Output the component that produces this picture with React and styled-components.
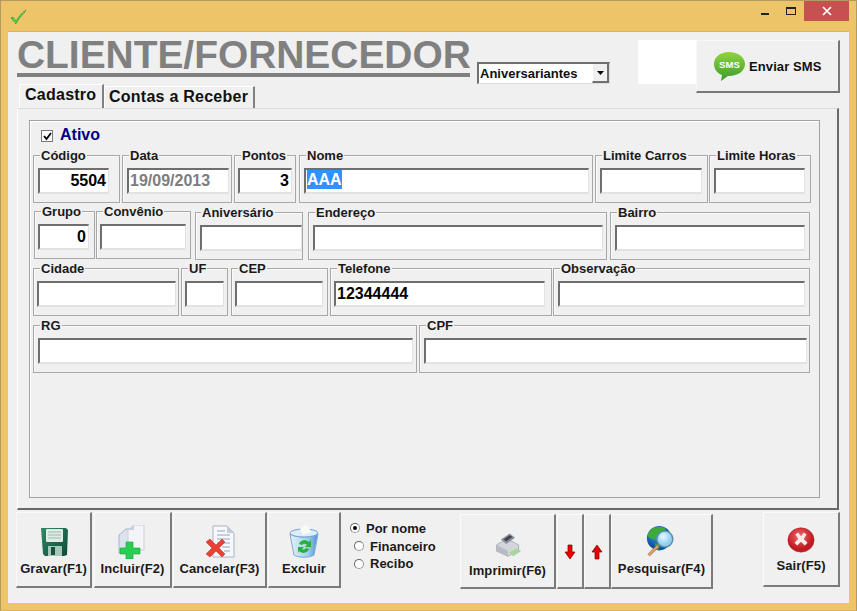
import React from 'react';
import styled, { createGlobalStyle } from 'styled-components';

const Global = createGlobalStyle`
  html, body { margin: 0; padding: 0; background: #edc467; }
  * { box-sizing: border-box; }
`;
const Win = styled.div`
  width: 857px; height: 611px; background: #edc467; display: flex; flex-direction: column;
  border: 1px solid #b39a5e; border-bottom-color: #d9b25c; padding: 0 7px 7px;
  font-family: "Liberation Sans", Arial, sans-serif; color: #111; overflow: hidden;
`;
const TitleBar = styled.div`
  height: 30px; flex: none; display: flex; align-items: flex-start; justify-content: space-between;
`;
const AppIcon = styled.svg`width: 17px; height: 17px; margin: 7px 0 0 2px;`;
const Controls = styled.div`display: flex; align-items: flex-start;`;
const Ctl = styled.div`
  width: ${p => p.$w}px; height: 20px; display: flex; align-items: center; justify-content: center;
  background: ${p => p.$bg || 'transparent'};
`;
const Client = styled.div`
  flex: 1; background: #f0f0f0; display: flex; flex-direction: column; padding: 0 10px 0 8px;
  border: 1px solid #d8b45f; border-width: 1px 0 0 0;
`;
const Top = styled.div`height: 76px; flex: none; display: flex; justify-content: space-between;`;
const TopLeft = styled.div`display: flex; flex-direction: column; justify-content: space-between;`;
const TitleRow = styled.div`display: flex; align-items: flex-start; padding: 4px 0 0 1px;`;
const Title = styled.h1`
  margin: 0; height: 41px; border-bottom: 4px solid #808080; color: #808080;
  font: bold 38.9px/37px "Liberation Sans", Arial, sans-serif; white-space: nowrap; width: 453px;
`;
const Select = styled.div`
  width: 133px; height: 22px; margin: 26px 0 0 7px; background: #fff; display: flex;
  border-top: 2px solid #707070; border-left: 2px solid #707070;
  border-right: 1px solid #ddd; border-bottom: 1px solid #ddd;
  font: bold 13px/19px "Liberation Sans", Arial, sans-serif; padding-left: 1px;
  justify-content: space-between;
`;
const SelectBtn = styled.div`
  width: 17px; background: #f0f0f0; display: flex; align-items: center; justify-content: center;
  border-right: 2px solid #707070; border-bottom: 2px solid #707070; border-left: 1px solid #fff;
`;
const Tabs = styled.div`display: flex; align-items: flex-end; padding-left: 3px;`;
const Tab = styled.div`
  height: ${p => p.$h}px; padding: 0 ${p => p.$px}px; width: ${p => p.$w}px;
  border-right: 2px solid #808080; border-left: 1px solid #fff; border-top: 1px solid #fff;
  font: bold 16px/${p => p.$lh}px "Liberation Sans", Arial, sans-serif; white-space: nowrap; letter-spacing: .25px;
`;
const TopRight = styled.div`display: flex; align-items: flex-start; padding: 8px 0 0;`;
const WhiteBox = styled.div`width: 58px; height: 44px; background: #fff;`;
const SmsBtn = styled.div`
  width: 144px; height: 53px; display: flex; align-items: center; gap: 3px; padding: 0 0 0 16px;
  border-top: 1px solid #f8f8f8; border-left: 1px solid #f8f8f8;
  border-right: 2px solid #777; border-bottom: 2px solid #777;
  font: bold 13px "Liberation Sans", Arial, sans-serif; letter-spacing: .1px; margin-right: -1px;
`;
const Panel = styled.div`
  width: 822px; height: 402px; flex: none; padding: 11px 17px 10px 11px; margin-left: 1px;
  border-top: 1px solid #dcdcdc; border-left: 1px solid #fff;
  border-right: 2px solid #696969; border-bottom: 2px solid #696969;
  display: flex;
`;
const Inner = styled.div`
  flex: 1; border: 1px solid #a2a2a2; padding: 0 0 0 3px;
  box-shadow: inset 1px 1px 0 #fff; display: flex; flex-direction: column;
`;
const CheckRow = styled.div`
  height: 34px; flex: none; display: flex; align-items: flex-start; padding: 6px 0 0 8px; gap: 7px;
  color: #000080; font: bold 16px/16px "Liberation Sans", Arial, sans-serif;
`;
const CheckBox = styled.div`
  width: 12px; height: 12px; margin-top: 3px; background: #fff; display: flex;
  border: 1px solid #7a7a7a; align-items: center; justify-content: center;
`;
const Row = styled.div`display: flex; flex: none; margin-top: ${p => p.$mt || 0}px; height: ${p => p.$h || 48}px;`;
const Group = styled.div`
  width: ${p => p.$w}px; height: 48px; margin-left: ${p => p.$ml || 0}px;
  margin-top: ${p => p.$top || 0}px;
  border: 1px solid #a8a8a8; box-shadow: inset 1px 1px 0 #fafafa; flex: none; position: relative;
  padding: 12px 0 0 ${p => p.$ix}px;
`;
const Legend = styled.span`
  position: absolute; left: ${p => p.$x}px; top: -8px; background: #f0f0f0; padding: 0 1px;
  font: bold 13px/15px "Liberation Sans", Arial, sans-serif; white-space: nowrap; color: #1a1a1a;
`;
const Input = styled.div`
  width: ${p => p.$w}px; height: 26px; background: #fff; overflow: hidden;
  border-top: 2px solid #6e6e6e; border-left: 2px solid #6e6e6e;
  border-right: 1px solid #e2e2e2; border-bottom: 2px solid #e2e2e2;
  font: bold 16px/21px "Liberation Sans", Arial, sans-serif; padding: 0 2px 0 1px;
  text-align: ${p => p.$right ? 'right' : 'left'}; color: ${p => p.$muted ? '#7d7d7d' : '#000'};
`;
const Sel = styled.span`background: #3390ff; color: #fff; display: inline-block; height: 19px; line-height: 20px; vertical-align: top;`;
const Footer = styled.div`display: flex; align-items: flex-start; padding-top: 2px; width: 840px;`;
const Btn = styled.div`
  width: ${p => p.$w}px; height: ${p => p.$h || 76}px; margin-left: ${p => p.$ml || 0}px; margin-top: ${p => p.$mt || 0}px;
  flex: none; display: flex; flex-direction: column; align-items: center; padding-top: ${p => p.$pt || 12}px;
  border-top: 1px solid #fafafa; border-left: 1px solid #fafafa;
  border-right: 2px solid #7b7b7b; border-bottom: 2px solid #7b7b7b;
  font: bold 13px/15px "Liberation Sans", Arial, sans-serif; letter-spacing: .1px; white-space: nowrap; color: #1a1a1a;
`;
const BtnIcon = styled.svg`width: ${p => p.$s || 34}px; height: ${p => p.$s || 34}px; flex: none; margin-bottom: ${p => p.$mb ?? 2}px;`;
const Radios = styled.div`
  width: 110px; margin-left: 9px; padding-top: 7px; flex: none; display: flex; flex-direction: column;
  font: bold 13px/17px "Liberation Sans", Arial, sans-serif; color: #1a1a1a;
`;
const RadioRow = styled.div`display: flex; align-items: center; gap: 6px; padding-left: ${p => p.$pl}px; height: ${p => p.$h}px;`;
const Radio = styled.div`
  width: 10px; height: 10px; border-radius: 50%; background: #fff; border: 1px solid #9a9a9a;
  border-top-color: #666; border-left-color: #666; display: flex; align-items: center; justify-content: center;
`;
const Dot = styled.div`width: 4px; height: 4px; border-radius: 50%; background: #000;`;

const rows = [
  { mt: 0, groups: [
    { l: 'Código', ml: 0, w: 87, lx: 6, ix: 4, iw: 71, v: '5504', r: 1 },
    { l: 'Data', ml: 2, w: 110, lx: 6, ix: 4, iw: 102, v: '19/09/2013', m: 1 },
    { l: 'Pontos', ml: 2, w: 62, lx: 6, ix: 3, iw: 54, v: '3', r: 1 },
    { l: 'Nome', ml: 3, w: 294, lx: 6, ix: 4, iw: 285, sel: 'AAA' },
    { l: 'Limite Carros', ml: 2, w: 113, lx: 6, ix: 4, iw: 102 },
    { l: 'Limite Horas', ml: 1, w: 102, lx: 6, ix: 4, iw: 91 },
  ]},
  { mt: 8, h: 49, groups: [
    { l: 'Grupo', ml: 1, w: 61, lx: 6, ix: 3, iw: 51, v: '0', r: 1 },
    { l: 'Convênio', ml: 1, w: 95, lx: 6, ix: 3, iw: 86 },
    { l: 'Aniversário', ml: 4, w: 108, top: 1, lx: 5, ix: 4, iw: 102 },
    { l: 'Endereço', ml: 5, w: 299, top: 1, lx: 6, ix: 4, iw: 290 },
    { l: 'Bairro', ml: 3, w: 200, top: 1, lx: 6, ix: 4, iw: 190 },
  ]},
  { mt: 8, groups: [
    { l: 'Cidade', ml: 0, w: 146, lx: 6, ix: 3, iw: 139 },
    { l: 'UF', ml: 2, w: 47, lx: 6, ix: 3, iw: 39 },
    { l: 'CEP', ml: 3, w: 97, lx: 6, ix: 3, iw: 88 },
    { l: 'Telefone', ml: 2, w: 222, lx: 6, ix: 3, iw: 211, v: '12344444' },
    { l: 'Observação', ml: 1, w: 257, lx: 6, ix: 4, iw: 247 },
  ]},
  { mt: 9, groups: [
    { l: 'RG', ml: 0, w: 384, lx: 6, ix: 4, iw: 375 },
    { l: 'CPF', ml: 2, w: 391, lx: 6, ix: 4, iw: 383 },
  ]},
];

const Floppy = () => (
  <BtnIcon viewBox="0 0 34 34">
    <defs><linearGradient id="fl" x1="0" y1="0" x2="1" y2="1"><stop offset="0" stopColor="#2f8a68"/><stop offset="1" stopColor="#0e4a36"/></linearGradient></defs>
    <path d="M4 3h25l2 2-1 25-3 1H8l-2-2z" fill="url(#fl)"/>
    <rect x="9" y="4" width="17" height="13" rx="1" fill="#dfece5"/>
    <path d="M11 7h13M11 10h13M11 13h13" stroke="#9fb9ad"/>
    <rect x="11" y="21" width="14" height="10" fill="#a9c7b9"/>
    <rect x="14" y="22" width="4" height="8" fill="#17513d"/>
  </BtnIcon>
);
const Copy = () => (
  <BtnIcon viewBox="0 0 34 34">
    <path d="M3 10l7-6h9v24H3z" fill="#dbe3ef" stroke="#aab4c4"/>
    <path d="M12 5l6-5h10v25H12z" fill="#f3f4f7" stroke="#c9ced6"/>
    <path d="M12 5h6V0z" fill="#c9cfdb"/>
    <path d="M10 17h7v6h7v6h-7v5h-7v-5H4v-6h6z" fill="#27cf53" stroke="#13a03a" strokeWidth=".6"/>
  </BtnIcon>
);
const Cancel = () => (
  <BtnIcon viewBox="0 0 34 34">
    <path d="M10 1h14l7 7v24H10z" fill="#f7f8fb" stroke="#a9b2c2"/>
    <path d="M24 1v7h7z" fill="#c5ccd9"/>
    <path d="M14 6h8M14 10h13M14 14h13M14 18h13M19 22h8M21 26h6" stroke="#93a4c0"/>
    <path d="M3 17l4-3 6 6 6-6 3 3-6 6 6 6-3 3-6-6-6 6-4-3 6-6z" fill="#e84136" stroke="#b52b22" strokeWidth=".5"/>
  </BtnIcon>
);
const Bin = () => (
  <BtnIcon viewBox="0 0 34 34">
    <defs><linearGradient id="bn" x1="0" y1="0" x2="1" y2="0"><stop offset="0" stopColor="#e4f1fa"/><stop offset=".6" stopColor="#a7d2f0"/><stop offset="1" stopColor="#4f93d6"/></linearGradient></defs>
    <path d="M3 9c6 4 22 4 28 0l-4 21c-4 3-16 3-20 0z" fill="url(#bn)" stroke="#7fa9cf"/>
    <ellipse cx="17" cy="8" rx="14" ry="4" fill="#dcedf9" stroke="#6fa3d2"/>
    <path d="M13 4l5-4 4 2 2 5-8 3z" fill="#fbfbf3"/>
    <path d="M12 19a6 6 0 0 1 10-2l2-2v7h-6l2-2a3 3 0 0 0-5 0zM22 24a6 6 0 0 1-10 2l-1 2v-6h6l-2 2a3 3 0 0 0 4-1z" fill="#25b23b"/>
  </BtnIcon>
);
const Printer = () => (
  <BtnIcon viewBox="0 0 34 34" $s={30} $mb={4}>
    <path d="M4 18l12-7 13 7v7L17 31 4 25z" fill="#d2d6dc" stroke="#a4a9b1"/>
    <path d="M9 12L19 5l6 5-10 7z" fill="#8b8f99"/>
    <path d="M12 12l7-5 3 2-7 5z" fill="#3f4450"/>
    <path d="M18 27l9-5 5 3-9 6z" fill="#a8d69c"/>
    <path d="M4 25l13 6v-6L4 18z" fill="#b7bcc4"/>
  </BtnIcon>
);
const Globe = () => (
  <BtnIcon viewBox="0 0 34 34" $s={32} $mb={4}>
    <defs><radialGradient id="gl" cx=".4" cy=".35"><stop offset="0" stopColor="#3aa0ea"/><stop offset="1" stopColor="#0d4fa4"/></radialGradient><radialGradient id="mg" cx=".4" cy=".35"><stop offset="0" stopColor="#e8f8ff"/><stop offset="1" stopColor="#8fd0f0"/></radialGradient></defs>
    <circle cx="14" cy="14" r="13" fill="url(#gl)"/>
    <path d="M6 4c5-3 12-3 15 0l-3 5-6 1-2 6-6-2-3-3z" fill="#3eaa3a"/>
    <path d="M9 19l6 2-2 6-3-2z" fill="#35a038"/>
    <path d="M14 23L4 33l-2-2 10-10z" fill="#d9a066" stroke="#9c6b3b" strokeWidth=".6"/>
    <circle cx="20" cy="15" r="8.5" fill="url(#mg)" stroke="#5a8fb0" strokeWidth="1.6"/>
  </BtnIcon>
);
const Exit = () => (
  <BtnIcon viewBox="0 0 30 30" $s={28} $mb={4}>
    <defs><radialGradient id="ex" cx=".45" cy=".35"><stop offset="0" stopColor="#f26a6a"/><stop offset="1" stopColor="#c11b22"/></radialGradient></defs>
    <ellipse cx="15" cy="15" rx="14" ry="13" fill="url(#ex)" stroke="#a81c22" strokeWidth=".6"/>
    <path d="M9 9l3-2 3 4 3-4 3 2-3 5 4 4-3 3-4-4-4 4-3-3 4-4z" fill="#fbeaea"/>
  </BtnIcon>
);
const Arrow = ({ up }) => (
  <BtnIcon viewBox="0 0 10 16" $s={16} $mb={0} style={up ? { transform: 'rotate(180deg)' } : undefined}>
    <path d="M3 1h4v7h3l-5 7-5-7h3z" fill="#e80000" stroke="#7a0000" strokeWidth=".7"/>
  </BtnIcon>
);

export default function App() {
  return (
    <Win>
      <Global />
      <TitleBar>
        <AppIcon viewBox="0 0 17 17">
          <path d="M1 10l2-1 3 4c3-5 6-8 10-11l-1 2C11 8 8 12 6 16z" fill="#3fe04a" stroke="#2b7a2f" strokeWidth=".7" strokeDasharray="2 1"/>
        </AppIcon>
        <Controls>
          <Ctl $w={24}><svg width="9" height="9" viewBox="0 0 9 9"><rect x="0" y="6" width="8" height="2" fill="#222"/></svg></Ctl>
          <Ctl $w={27}><svg width="10" height="9" viewBox="0 0 10 9"><rect x=".5" y=".5" width="9" height="7" fill="none" stroke="#222"/><rect x="0" y="0" width="10" height="2" fill="#222"/></svg></Ctl>
          <Ctl $w={45} $bg="#c75050"><svg width="10" height="10" viewBox="0 0 10 10"><path d="M1 1l8 8M9 1l-8 8" stroke="#fff" strokeWidth="1.7"/></svg></Ctl>
        </Controls>
      </TitleBar>
      <Client>
        <Top>
          <TopLeft>
            <TitleRow>
              <Title>CLIENTE/FORNECEDOR</Title>
              <Select>Aniversariantes
                <SelectBtn><svg width="7" height="4" viewBox="0 0 7 4"><path d="M0 0h7L3.5 4z" fill="#000"/></svg></SelectBtn>
              </Select>
            </TitleRow>
            <Tabs>
              <Tab $h={25} $w={85} $px={5} $lh={19}>Cadastro</Tab>
              <Tab $h={23} $w={151} $px={4} $lh={20}>Contas a Receber</Tab>
            </Tabs>
          </TopLeft>
          <TopRight>
            <WhiteBox />
            <SmsBtn>
              <svg width="33" height="30" viewBox="0 0 33 30">
                <defs><linearGradient id="sm" x1="0" y1="0" x2="0" y2="1"><stop offset="0" stopColor="#8fd43f"/><stop offset="1" stopColor="#3b9a2c"/></linearGradient></defs>
                <path d="M16 1c9 0 16 5 16 12s-7 12-16 12h-1l-7 5 1-6C4 22 1 18 1 13 1 6 7 1 16 1z" fill="url(#sm)"/>
                <text x="16.5" y="17" textAnchor="middle" fontFamily="Liberation Sans" fontWeight="bold" fontSize="9.5" fill="#fff">SMS</text>
              </svg>
              Enviar SMS
            </SmsBtn>
          </TopRight>
        </Top>
        <Panel>
          <Inner>
            <CheckRow>
              <CheckBox><svg width="9" height="9" viewBox="0 0 9 9"><path d="M1 4l2.5 3L8 1" fill="none" stroke="#000" strokeWidth="1.8"/></svg></CheckBox>
              Ativo
            </CheckRow>
            {rows.map((r, i) => (
              <Row key={i} $mt={r.mt} $h={r.h}>
                {r.groups.map(g => (
                  <Group key={g.l} $w={g.w} $ml={g.ml} $ix={g.ix} $top={g.top}>
                    <Legend $x={g.lx}>{g.l}</Legend>
                    <Input $w={g.iw} $right={g.r} $muted={g.m}>
                      {g.sel ? <Sel>{g.sel}</Sel> : g.v}
                    </Input>
                  </Group>
                ))}
              </Row>
            ))}
          </Inner>
        </Panel>
        <Footer>
          <Btn $w={76}><Floppy />Gravar(F1)</Btn>
          <Btn $w={78} $ml={2}><Copy />Incluir(F2)</Btn>
          <Btn $w={94} $ml={1}><Cancel />Cancelar(F3)</Btn>
          <Btn $w={73} $ml={1}><Bin />Excluir</Btn>
          <Radios>
            <RadioRow $pl={0} $h={18}><Radio><Dot /></Radio>Por nome</RadioRow>
            <RadioRow $pl={4} $h={18}><Radio />Financeiro</RadioRow>
            <RadioRow $pl={4} $h={17}><Radio />Recibo</RadioRow>
          </Radios>
          <Btn $w={96} $h={75} $mt={2} $pt={14}><Printer />Imprimir(F6)</Btn>
          <Btn $w={27} $h={75} $ml={1} $mt={2} $pt={29}><Arrow /></Btn>
          <Btn $w={27} $h={75} $mt={2} $pt={29}><Arrow up /></Btn>
          <Btn $w={102} $h={75} $mt={2} $pt={10}><Globe />Pesquisar(F4)</Btn>
          <Btn $w={77} $h={75} $ml={50} $pt={13}><Exit />Sair(F5)</Btn>
        </Footer>
      </Client>
    </Win>
  );
}
